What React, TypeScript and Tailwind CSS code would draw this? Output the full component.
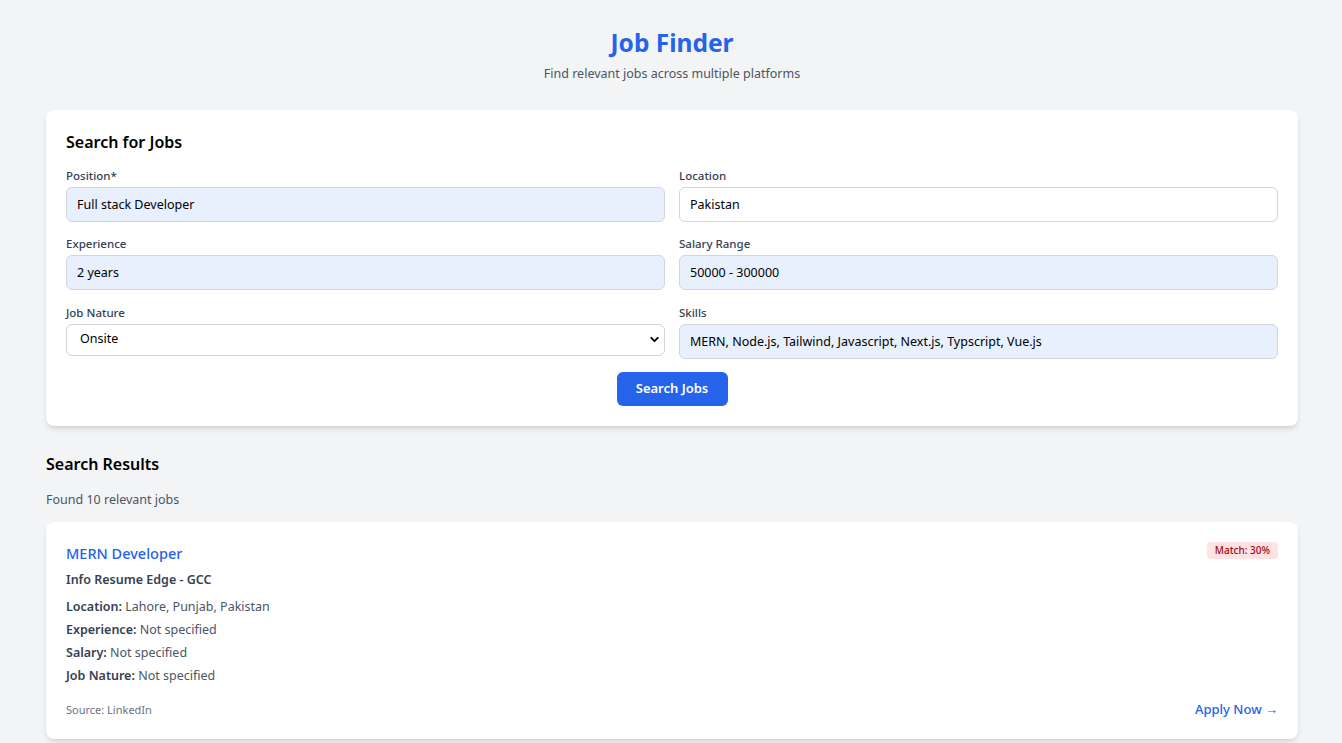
import { ChevronDown } from "lucide-react";

const font = { fontFamily: '"Noto Sans", "Segoe UI", sans-serif' };

function Field({ label, value, filled = true, className = "" }: { label: string; value: string; filled?: boolean; className?: string }) {
  return (
    <label className={`flex flex-col ${className}`}>
      <span className="mb-[3px] text-[11.5px] font-medium leading-[16px] text-gray-700">{label}</span>
      <input
        readOnly
        value={value}
        className={`h-[35px] rounded-md border border-gray-300 px-[10px] text-[12.5px] text-black outline-none ${filled ? "bg-[#e8f0fe]" : "bg-white"}`}
      />
    </label>
  );
}

function Detail({ k, v }: { k: string; v: string }) {
  return (
    <p className="text-[12.5px] leading-[23px] text-gray-600">
      <span className="font-semibold text-gray-700">{k}:</span> {v}
    </p>
  );
}

export default function App() {
  return (
    <div className="min-h-screen bg-gray-100" style={font}>
      <div className="ml-[46px] w-[1252px] pt-[26px] pb-6">
        <header className="mb-[26px] text-center">
          <h1 className="text-[24.5px] font-bold leading-[33px] text-[#2563eb]">Job Finder</h1>
          <p className="mt-[6px] text-[12.5px] text-gray-600">Find relevant jobs across multiple platforms</p>
        </header>

        <section className="rounded-lg bg-white p-5 shadow-md">
          <h2 className="mb-[14px] text-[16px] font-semibold leading-[24px] text-black">Search for Jobs</h2>
          <div className="grid grid-cols-2 gap-x-3.5 gap-y-[14px]">
            <Field label="Position*" value="Full stack Developer" />
            <Field label="Location" value="Pakistan" filled={false} />
            <Field label="Experience" value="2 years" />
            <Field label="Salary Range" value="50000 - 300000" />
            <label className="mt-px flex flex-col">
              <span className="mb-[3px] text-[11.5px] font-medium leading-[16px] text-gray-700">Job Nature</span>
              <div className="relative">
                <select
                  defaultValue="Onsite"
                  className="h-[32px] w-full appearance-none rounded-md border border-gray-300 bg-white px-[13px] text-[12.5px] text-black outline-none"
                >
                  <option>Onsite</option>
                  <option>Remote</option>
                  <option>Hybrid</option>
                </select>
                <ChevronDown className="pointer-events-none absolute right-[4px] top-[9px] h-[13px] w-[13px] text-black" strokeWidth={3.5} />
              </div>
            </label>
            <Field className="mt-px" label="Skills" value="MERN, Node.js, Tailwind, Javascript, Next.js, Typscript, Vue.js" />
          </div>
          <div className="mt-[13px] flex justify-center">
            <button className="h-[34px] w-[111px] rounded-md bg-[#2563eb] text-[13px] font-semibold text-white">Search Jobs</button>
          </div>
        </section>

        <h2 className="mt-[26px] text-[16px] font-semibold leading-[24px] text-black">Search Results</h2>
        <p className="mt-[15px] text-[12.5px] text-gray-600">Found 10 relevant jobs</p>

        <article className="mt-[12px] rounded-lg bg-white px-5 pt-5 pb-[19px] shadow-md">
          <div className="flex items-start justify-between">
            <div>
              <h3 className="text-[14.5px] font-medium leading-[22px] text-[#2563eb]">MERN Developer</h3>
              <p className="mt-[7px] text-[12.5px] font-semibold text-gray-700">Info Resume Edge - GCC</p>
            </div>
            <span className="rounded bg-red-100 px-[8px] py-[1px] text-[10px] font-medium text-red-800">Match: 30%</span>
          </div>
          <div className="mt-[6px]">
            <Detail k="Location" v="Lahore, Punjab, Pakistan" />
            <Detail k="Experience" v="Not specified" />
            <Detail k="Salary" v="Not specified" />
            <Detail k="Job Nature" v="Not specified" />
          </div>
          <div className="mt-[13px] flex items-center justify-between">
            <span className="text-[11px] text-gray-500">Source: LinkedIn</span>
            <a className="text-[13px] font-medium text-[#2563eb]">Apply Now →</a>
          </div>
        </article>
      </div>
    </div>
  );
}
